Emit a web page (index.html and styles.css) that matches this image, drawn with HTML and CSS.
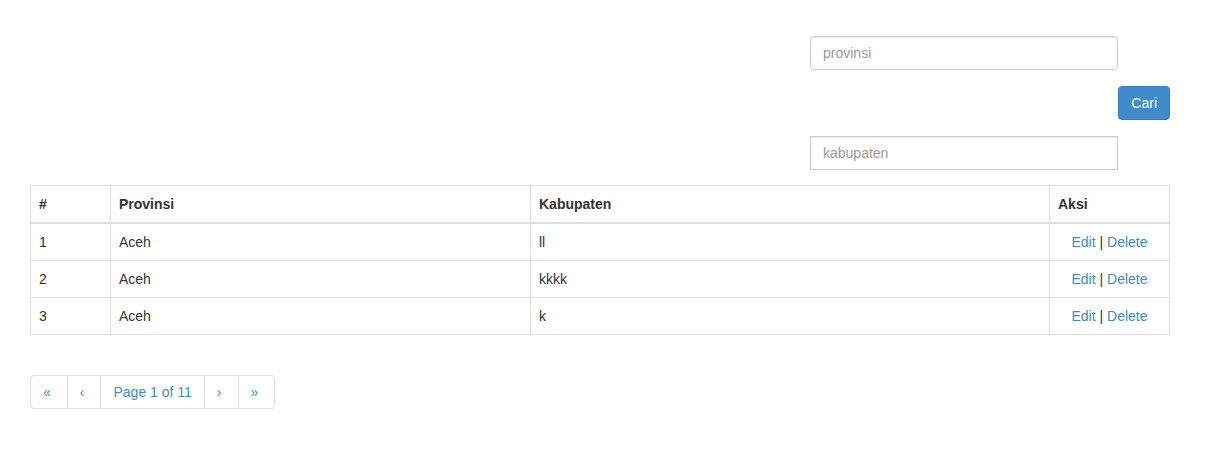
FILE: index.html
```html
<!DOCTYPE html>
<html lang="en">
<head>
    <meta charset="UTF-8">
    <title>Data Kabupaten</title>
    <link rel="stylesheet" href="styles.css">
</head>
<body>

<div class="container">
    <form class="search-form" action="#" method="GET">
        <input type="text" class="form-control rounded" name="provinsi" placeholder="provinsi">
        <button type="submit" class="btn-primary">Cari</button>
        <input type="text" class="form-control" name="kabupaten" placeholder="kabupaten">
    </form>

    <table class="data-table">
        <thead>
            <tr>
                <th class="col-no">#</th>
                <th class="col-prov">Provinsi</th>
                <th class="col-kab">Kabupaten</th>
                <th class="col-aksi">Aksi</th>
            </tr>
        </thead>
        <tbody>
            <tr>
                <td>1</td>
                <td>Aceh</td>
                <td>ll</td>
                <td class="aksi"><a href="#">Edit</a> | <a href="#">Delete</a></td>
            </tr>
            <tr>
                <td>2</td>
                <td>Aceh</td>
                <td>kkkk</td>
                <td class="aksi"><a href="#">Edit</a> | <a href="#">Delete</a></td>
            </tr>
            <tr>
                <td>3</td>
                <td>Aceh</td>
                <td>k</td>
                <td class="aksi"><a href="#">Edit</a> | <a href="#">Delete</a></td>
            </tr>
        </tbody>
    </table>

    <ul class="pagination">
        <li><a href="#" class="arrow">&laquo;</a></li>
        <li><a href="#" class="arrow">&lsaquo;</a></li>
        <li><a href="#">Page 1 of 11</a></li>
        <li><a href="#" class="arrow">&rsaquo;</a></li>
        <li><a href="#" class="arrow">&raquo;</a></li>
    </ul>
</div>

</body>
</html>
```

FILE: styles.css
```css
/* Basic Styling */
body {
    margin: 0; font-family: "Liberation Sans", Arial, sans-serif;
    font-size: 14px; line-height: 20px; color: #333; background: #fff;
}
.container { width: 1140px; padding: 36px 0 0 30px; }
a { color: #428bca; text-decoration: none; }

/* Search form */
.search-form {
    display: flex; flex-direction: column; align-items: flex-end;
    gap: 16px; margin-bottom: 15px;
}
.form-control {
    width: 308px; height: 34px; box-sizing: border-box; margin-right: 52px;
    padding: 6px 12px; border: 1px solid #ccc; border-radius: 0;
    font: inherit; color: #555;
    box-shadow: inset 0 1px 1px rgba(0,0,0,0.075);
}
.form-control.rounded { border-radius: 4px; }
.form-control::placeholder { color: #999; }
.btn-primary {
    height: 34px; padding: 6px 12px; font: inherit; color: #fff;
    background-color: #428bca; border: 1px solid #357ebd;
    border-radius: 4px; cursor: pointer;
}

/* Table */
.data-table {
    width: 1140px; border-collapse: collapse; border: 1px solid #ddd;
    margin-bottom: 40px;
}
.data-table th, .data-table td {
    padding: 8px; border: 1px solid #ddd; text-align: left;
    vertical-align: top; line-height: 20px;
}
.data-table th { font-weight: bold; border-bottom-width: 2px; }
.col-no { width: 63px; }
.col-prov { width: 403px; }
.col-kab { width: 502px; }
.data-table td.aksi { text-align: center; }

/* Pagination */
.pagination { display: flex; list-style: none; margin: 0; padding: 0; }
.pagination li a {
    display: block; padding: 6px 12px; line-height: 20px;
    border: 1px solid #ddd; margin-left: -1px; background: #fff;
}
.pagination li a.arrow { padding-right: 16px; }
.pagination li:first-child a { margin-left: 0; border-radius: 4px 0 0 4px; }
.pagination li:last-child a { border-radius: 0 4px 4px 0; }
```
